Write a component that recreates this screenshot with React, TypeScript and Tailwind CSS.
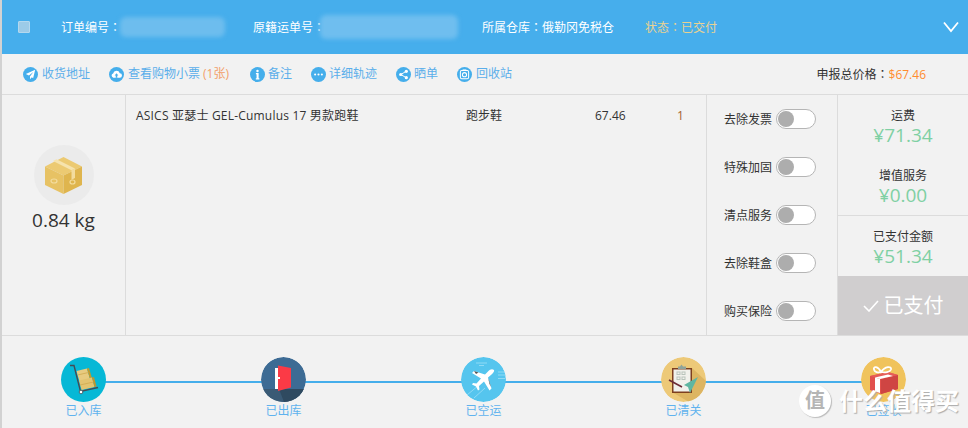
import React from 'react';

const font = { fontFamily: '"Open Sans", "Noto Sans CJK SC", sans-serif' };

// the TC cut of the font centres its full-width colon, as the reference does
const Colon = () => <span className="font-['Noto_Sans_CJK_TC']">：</span>;

const RoundIcon: React.FC<{ children: React.ReactNode }> = ({ children }) => (
  <svg viewBox="0 0 16 16" className="w-[15px] h-[15px] shrink-0">
    <circle cx="8" cy="8" r="8" fill="#45aeeb" />
    {children}
  </svg>
);

const tools: { label: string; extra?: string; ml: string; gap: string; icon: React.ReactNode }[] = [
  { label: '收货地址', ml: 'ml-0', gap: 'gap-[4px]', icon: <path d="M13 3 L3 7.5 L6.3 9 L11 5.2 L7.4 10 L7.6 13 L9.4 11 L10.8 12 Z" fill="#fff" /> },
  {
    label: '查看购物小票',
    extra: '(1张)',
    ml: 'ml-[19px]',
    gap: 'gap-[4px]',
    icon: (
      <>
        <path d="M4.6 11.4 A2.4 2.4 0 0 1 4.4 6.8 A3.7 3.7 0 0 1 11.5 6.6 A2.4 2.4 0 0 1 11.4 11.4 Z" fill="#fff" />
        <path d="M8 6.6 L10 9 H8.8 V11.4 H7.2 V9 H6 Z" fill="#45aeeb" />
      </>
    ),
  },
  {
    label: '备注',
    ml: 'ml-[19px]',
    gap: 'gap-[3px]',
    icon: (
      <>
        <circle cx="8" cy="4.2" r="1.3" fill="#fff" />
        <path d="M6.3 6.5 H9.2 V12 H10 V13.2 H6.2 V12 H7 V7.7 H6.3 Z" fill="#fff" />
      </>
    ),
  },
  {
    label: '详细轨迹',
    ml: 'ml-[19px]',
    gap: 'gap-[3px]',
    icon: (
      <>
        <circle cx="4.4" cy="8" r="1.1" fill="#fff" />
        <circle cx="8" cy="8" r="1.1" fill="#fff" />
        <circle cx="11.6" cy="8" r="1.1" fill="#fff" />
      </>
    ),
  },
  {
    label: '晒单',
    ml: 'ml-[19px]',
    gap: 'gap-[3px]',
    icon: (
      <>
        <path d="M11 4.6 L5 8 L11 11.4" fill="none" stroke="#fff" strokeWidth="1" />
        <circle cx="11" cy="4.6" r="1.7" fill="#fff" />
        <circle cx="5" cy="8" r="1.7" fill="#fff" />
        <circle cx="11" cy="11.4" r="1.7" fill="#fff" />
      </>
    ),
  },
  {
    label: '回收站',
    ml: 'ml-[19px]',
    gap: 'gap-[4px]',
    icon: (
      <>
        <rect x="3.6" y="3.8" width="8.8" height="8.8" rx="1.4" fill="none" stroke="#fff" strokeWidth="1.1" />
        <circle cx="8" cy="8.2" r="2.2" fill="none" stroke="#fff" strokeWidth="1.1" />
        <rect x="6" y="2.6" width="4" height="1.2" fill="#fff" />
      </>
    ),
  },
];

const options = ['去除发票', '特殊加固', '清点服务', '去除鞋盒', '购买保险'];

const TrolleyIcon = () => (
  <svg viewBox="0 0 45 45" className="w-[45px] h-[45px]">
    <circle cx="22.5" cy="22.5" r="22.5" fill="#06b8d6" />
    <path d="M15.500 14 L26 11.500 L29 22 L18.500 24.500 Z" fill="#e8cb80" />
    <path d="M26 11.500 L28 11 L31 21.500 L29 22 Z" fill="#c49a2a" />
    <path d="M18 23.500 L31 20.500 L33.500 30 L20.500 33 Z" fill="#e3c370" />
    <path d="M31 20.500 L33 20 L35.500 29.500 L33.500 30 Z" fill="#bf952f" />
    <path d="M16.500 18 L27.500 15.500 M19 28 L32.500 25" stroke="#cfa94f" strokeWidth="0.8" />
    <path d="M9 8.500 H13 L19.500 34.500 L37 30.500" fill="none" stroke="#444b55" strokeWidth="1.400" />
    <circle cx="20" cy="35" r="1.800" fill="#fff" stroke="#444b55" strokeWidth="0.8" />
  </svg>
);

const DoorIcon = () => (
  <svg viewBox="0 0 45 45" className="w-[45px] h-[45px] overflow-hidden rounded-full">
    <circle cx="22.5" cy="22.5" r="22.5" fill="#3d6b94" />
    <path d="M0 32 H45 V45 H0 Z" fill="#3a5a75" />
    <path d="M18 32 H45 L38 45 H23 Z" fill="#2f4a60" />
    <rect x="14" y="11" width="3" height="21" fill="#fff" />
    <path d="M17 8.5 L30 11 V30.5 L17 34 Z" fill="#fb3a46" />
    <rect x="17" y="20" width="2" height="2" fill="#fff" />
  </svg>
);

const PlaneIcon = () => (
  <svg viewBox="0 0 45 45" className="w-[45px] h-[45px] overflow-hidden rounded-full">
    <circle cx="22.5" cy="22.5" r="22.5" fill="#55c5ee" />
    <g stroke="#8fdaf5" strokeWidth="1">
      <path d="M15 6 H26 M18 8.5 H23 M37 15 H44 M37 18 H45 M37 21.5 H44 M6 38 L18 28 M13 41 L24 31" />
    </g>
    <path d="M33 13 C31 11.5 29 12.5 27 14.5 L24 17.5 L13 14 L11 16 L20 21.5 L15.5 26.5 L12 26 L11 27.5 L15 29.5 L17 33.5 L18.5 32.5 L18 29 L23 24.5 L28.5 33.5 L30.5 31.5 L27 20.5 L30.5 17.5 C32.5 15.5 33.5 14.5 33 13 Z" fill="#fff" />
    <path d="M13 14 L17.5 15.5 L15 17 Z M27 20.5 L28.5 25 L30 30 L28.5 27 Z" fill="#555" />
  </svg>
);

const ClipboardIcon = () => (
  <svg viewBox="0 0 45 45" className="w-[45px] h-[45px] overflow-hidden rounded-full">
    <circle cx="22.5" cy="22.5" r="22.5" fill="#edc978" />
    <path d="M31 11 L45 24 V45 H28 L11 35 Z" fill="#ddb562" />
    <rect x="11" y="11" width="20" height="25" fill="#7d3f1f" />
    <rect x="12.5" y="12.5" width="17" height="22" fill="#f1f1ec" />
    <path d="M17 12 V9.5 H19 L20.5 7.5 L22 9.5 H25 V12 Z" fill="#8fa39a" />
    <g fill="none" stroke="#b9c4bb" strokeWidth="1">
      <rect x="16" y="15" width="3" height="2.5" />
      <rect x="21" y="15" width="3" height="2.5" />
      <rect x="16" y="20" width="3" height="2.5" />
      <rect x="21" y="20" width="3" height="2.5" />
    </g>
    <path d="M8 23 L21 30" stroke="#6b2a35" strokeWidth="1.6" />
    <path d="M37 20 L23 28 L27 30 L29 36 Z" fill="#5fb6a2" />
  </svg>
);

const GiftIcon = () => (
  <svg viewBox="0 0 45 45" className="w-[45px] h-[45px] overflow-hidden rounded-full">
    <circle cx="22.5" cy="22.5" r="22.5" fill="#f0c35c" />
    <path d="M9 19 L27 15 L37 18 V32 L20 37 L9 33 Z" fill="#e2504c" />
    <path d="M20 22 L37 18 V32 L20 37 Z" fill="#cf4543" />
    <path d="M9 19 L20 22 L37 18 L27 15 Z" fill="#e65c58" />
    <path d="M14 20.500 L19 22 V36 L14 34.500 Z" fill="#fff" />
    <path d="M14 20.500 L19 22 L32 19 L27 17.500 Z" fill="#fff" />
    <path d="M20 15 C17 9 12 9 13 12.500 C13.500 15 17 16 20 15 C24 16 29 15 30 12.500 C31 9 24 9 20 15 Z" fill="none" stroke="#fff" strokeWidth="1.800" />
  </svg>
);

const steps = [
  { label: '已入库', icon: <TrolleyIcon /> },
  { label: '已出库', icon: <DoorIcon /> },
  { label: '已空运', icon: <PlaneIcon /> },
  { label: '已清关', icon: <ClipboardIcon /> },
  { label: '已签收', icon: <GiftIcon /> },
];

export default function App() {
  return (
    <div className="relative w-[968px] h-[428px] overflow-hidden border-l-2 border-[#d2d2d2] bg-[#f2f2f2] text-[12px] text-[#333]" style={font}>
      {/* header */}
      <div className="flex items-center h-[54px] bg-[#46aeec] text-white">
        <span className="ml-[16px] w-[12px] h-[12px] rounded-[1px] bg-[#9ccbe8] border border-[#b4d8ee]" />
        <span className="ml-[31px] w-[59px] whitespace-nowrap">订单编号<Colon /></span>
        <span className="w-[105px] h-[20px] rounded-md bg-[#6dbdee] blur-[2px]" />
        <span className="ml-[28px] w-[67px] whitespace-nowrap">原籍运单号<Colon /></span>
        <span className="w-[138px] h-[24px] rounded-md bg-[#6fbeef] blur-[2px]" />
        <span className="ml-[24px] w-[163px] whitespace-nowrap">所属仓库<Colon />俄勒冈免税仓</span>
        <span className="whitespace-nowrap text-[#e9d291]">状态<Colon />已交付</span>
        <svg viewBox="0 0 16 12" className="ml-auto mr-[9px] w-[16px] h-[12px]" fill="none" stroke="#fff" strokeWidth="1.8">
          <path d="M1 1.5 L8 10 L15 1.500" />
        </svg>
      </div>

      {/* toolbar */}
      <div className="flex items-center h-[41px] pl-[21px] pr-[42px] border-b border-[#dcdcdc] text-[#5aaeea]">
        {tools.map(t => (
          <div key={t.label} className={`flex items-center whitespace-nowrap ${t.gap} ${t.ml}`}>
            <RoundIcon>{t.icon}</RoundIcon>
            <span>
              {t.label}
              {t.extra && <span className="ml-[3px] mr-[2px] text-[#f2a06a]">{t.extra}</span>}
            </span>
          </div>
        ))}
        <div className="ml-auto whitespace-nowrap text-[#333]">
          申报总价格<Colon /><span className="text-[#ff8c2e]">$67.46</span>
        </div>
      </div>

      {/* main */}
      <div className="flex h-[241px] border-b border-[#dcdcdc]">
        <div className="w-[124px] shrink-0 flex flex-col items-center border-r border-[#dcdcdc]">
          <div className="mt-[50px] flex items-center justify-center w-[60px] h-[60px] rounded-full bg-[#ebebeb]">
            <svg viewBox="0 0 37 37" className="w-[37px] h-[37px]">
              <path d="M18.500 0 L37 9.500 L18.500 18.500 L0 9.500 Z" fill="#ecca72" />
              <path d="M0 9.500 L18.500 18.500 V37 L0 28 Z" fill="#e7c264" />
              <path d="M18.500 18.500 L37 9.500 V28 L18.500 37 Z" fill="#dfb54e" />
              <path d="M8 4 L11.500 2.200 L30 11.500 L26.500 13.300 Z" fill="#f6e3ad" />
              <path d="M26.500 13.300 L30 11.500 V21 L26.500 22.800 Z" fill="#f3dc9e" />
              <ellipse cx="9" cy="24" rx="3" ry="2" fill="none" stroke="#f3dc9e" strokeWidth="1.2" />
              <ellipse cx="27.500" cy="25" rx="2.500" ry="2" fill="none" stroke="#f3dc9e" strokeWidth="1.2" />
            </svg>
          </div>
          <div className="mt-[1px] text-[19px] leading-[28px] text-[#333]">0.84 kg</div>
        </div>

        <div className="flex-1 flex pl-[10px] pt-[12px] leading-[18px] border-r border-[#dcdcdc] whitespace-nowrap">
          <span className="w-[330px] tracking-[0.2px]">ASICS 亚瑟士 GEL-Cumulus 17 男款跑鞋</span>
          <span className="w-[129px]">跑步鞋</span>
          <span className="w-[82px]">67.46</span>
          <span className="text-[#a5642f]">1</span>
        </div>

        <div className="w-[131px] shrink-0 flex flex-col gap-[28px] pl-[17px] pt-[14px] border-r border-[#dcdcdc]">
          {options.map(o => (
            <div key={o} className="flex items-center h-[20px]">
              <span className="w-[52px] pt-[1px] whitespace-nowrap">{o}</span>
              <span className="flex items-center w-[40px] h-[20px] rounded-full bg-white border border-[#b5b5b5] pl-[1px]">
                <span className="w-[16px] h-[16px] rounded-full bg-[#adadad]" />
              </span>
            </div>
          ))}
        </div>

        <div className="w-[130px] shrink-0 flex flex-col text-center">
          <div className="h-[121px] border-b border-[#dcdcdc] pt-[12px]">
            <div className="leading-[18px]">运费</div>
            <div className="text-[19px] leading-[20px] text-[#7fd0a3]">¥71.34</div>
            <div className="mt-[22px] leading-[18px]">增值服务</div>
            <div className="text-[19px] leading-[20px] text-[#7fd0a3]">¥0.00</div>
          </div>
          <div className="h-[60px] pt-[12px]">
            <div className="leading-[18px]">已支付金额</div>
            <div className="text-[19px] leading-[20px] text-[#7fd0a3]">¥51.34</div>
          </div>
          <div className="flex-1 flex items-center justify-center gap-[5px] bg-[#d0cecf] text-white text-[20px]">
            <svg viewBox="0 0 16 12" className="w-[16px] h-[12px]" fill="none" stroke="#fff" strokeWidth="1.600">
              <path d="M1 6 L6 11 L15 1" />
            </svg>
            已支付
          </div>
        </div>
      </div>

      {/* progress */}
      <div className="relative flex justify-between pl-[59px] pr-[62px] pt-[21px]">
        <div className="absolute left-[80px] right-[80px] top-[45px] h-[2px] bg-[#45aeeb]" />
        {steps.map(s => (
          <div key={s.label} className="relative flex flex-col items-center w-[45px]">
            {s.icon}
            <span className="whitespace-nowrap leading-[18px] text-[#5fb2ee]">{s.label}</span>
          </div>
        ))}
      </div>

      {/* watermark */}
      <div className="absolute left-[797px] top-[385px] flex items-center gap-[8px] text-white [text-shadow:1px_1px_1px_#aaa]">
        <span className="flex items-center justify-center w-[32px] h-[32px] rounded-full bg-white shadow-[1px_1px_1px_#bbb] text-[#b5b5b5] text-[20px] font-bold [text-shadow:none]">值</span>
        <span className="text-[24px] leading-[32px] font-bold whitespace-nowrap">什么值得买</span>
      </div>
    </div>
  );
}
